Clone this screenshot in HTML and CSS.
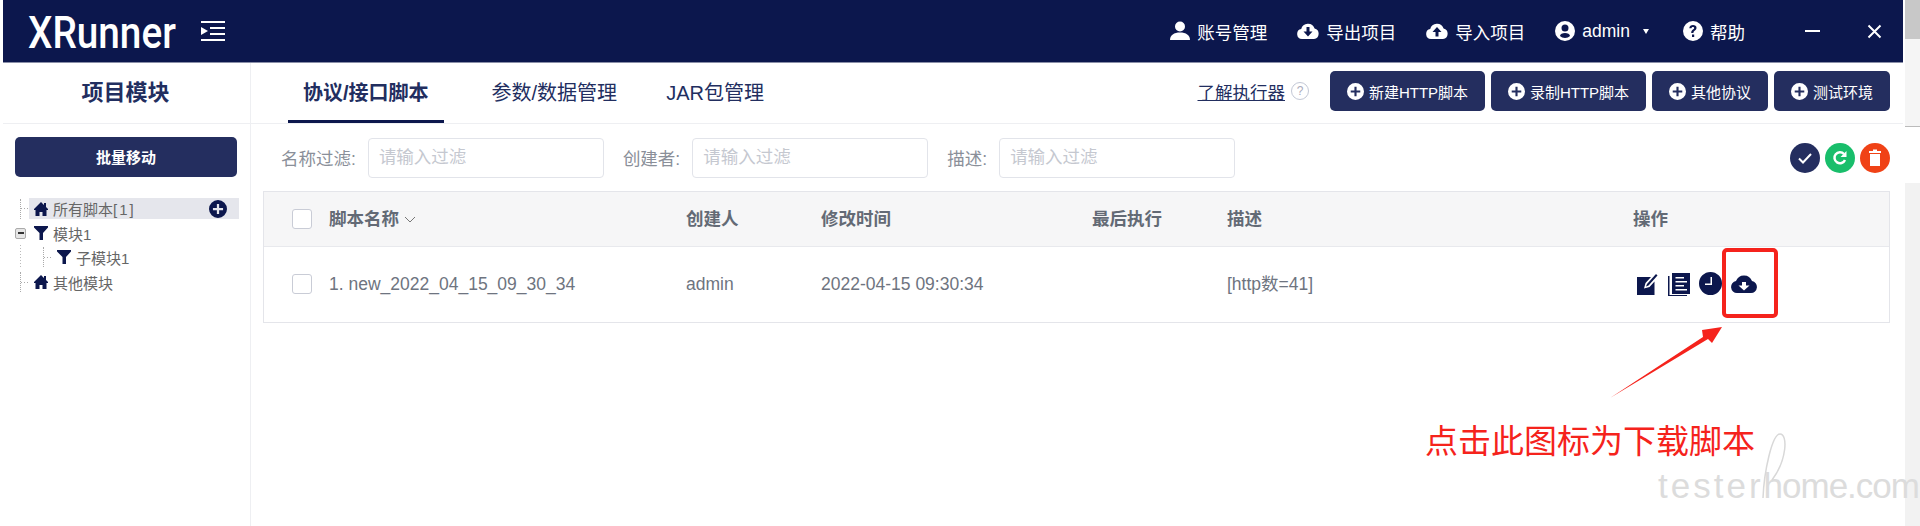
FILE: index.html
```html
<!DOCTYPE html>
<html lang="zh-CN">
<head>
    <meta charset="UTF-8">
    <title>XRunner</title>
    <link rel="stylesheet" href="styles.css">
</head>
<body>
    <svg class="sprites" width="0" height="0">
        <symbol id="i-home" viewBox="0 0 14 14"><path d="M7 0 0 7v1h1.500v6h4v-4h3v4h4V8H14V7l-2-2V1h-2v2z"/></symbol>
        <symbol id="i-funnel" viewBox="0 0 14 14"><path d="M0 0h14v1.500L9 7v7H5.500V7L0 1.500z"/></symbol>
        <symbol id="i-plus" viewBox="0 0 16 16"><path fill-rule="evenodd" d="M8 0a8 8 0 1 1 0 16A8 8 0 0 1 8 0zM7 3.500V7H3.500v2H7v3.500h2V9h3.500V7H9V3.500z"/></symbol>
    </svg>

    <div class="shell">
        <div class="app">
            <header class="topbar">
                <div class="brand">
                    <span class="logo">XRunner</span>
                    <svg class="menu-toggle" width="24" height="20" viewBox="0 0 24 20"><path fill="#fff" d="M0 0h24v2H0zM9 6h15v2H9zM9 12h15v2H9zM0 18h24v2H0zM0 6l7 4-7 4z"/></svg>
                </div>
                <nav class="topnav">
                    <a class="topnav-item">
                        <svg width="20" height="20" viewBox="0 0 20 20"><circle cx="10" cy="5.500" r="5"/><path d="M0 19c0-5 4-7.500 10-7.500S20 14 20 19z"/></svg>账号管理
                    </a>
                    <a class="topnav-item">
                        <svg width="22" height="18" viewBox="0 0 22 18"><path fill-rule="evenodd" d="M5 17a5 5 0 0 1-.8-9.900 7 7 0 0 1 13.400-.5A5.300 5.300 0 0 1 17 17zM9.500 5v4.500H6.500l4.500 5 4.500-5h-3V5z"/></svg>导出项目
                    </a>
                    <a class="topnav-item">
                        <svg width="22" height="18" viewBox="0 0 22 18"><path fill-rule="evenodd" d="M5 17a5 5 0 0 1-.8-9.900 7 7 0 0 1 13.400-.5A5.300 5.300 0 0 1 17 17zM9.500 14.500V10H6.500l4.500-5 4.500 5h-3v4.500z"/></svg>导入项目
                    </a>
                    <a class="topnav-item">
                        <svg width="20" height="20" viewBox="0 0 20 20"><path fill-rule="evenodd" d="M10 0a10 10 0 1 1 0 20 10 10 0 0 1 0-20zm0 3.500a3.500 3.500 0 1 0 0 7 3.500 3.500 0 0 0 0-7zm0 8.500c-2.500 0-5 1-5 3 1.200 1.300 3 2 5 2s3.800-.7 5-2c0-2-2.500-3-5-3z"/></svg>admin<span class="caret"></span>
                    </a>
                    <a class="topnav-item">
                        <svg width="20" height="20" viewBox="0 0 20 20"><path fill-rule="evenodd" d="M10 0a10 10 0 1 1 0 20 10 10 0 0 1 0-20zM9 13.500V16h2.200v-2.500zM10 4c-2 0-3.500 1-3.700 3.200h2.200c.1-.9.600-1.300 1.400-1.300.8 0 1.300.4 1.300 1.100 0 1.500-3 1.500-3 5h2.200c0-2.300 3.100-2.400 3.100-5.200C13.500 5 12 4 10 4z"/></svg>帮助
                    </a>
                </nav>
                <div class="win-controls">
                    <span class="win-min"></span>
                    <svg width="15" height="15" viewBox="0 0 15 15"><path stroke="#fff" stroke-width="2" d="M1.500 1.500l12 12M13.500 1.500l-12 12"/></svg>
                </div>
            </header>

            <div class="workspace">
                <aside class="sidebar">
                    <h2 class="sidebar-title">项目模块</h2>
                    <div class="sidebar-body">
                        <button class="batch-btn">批量移动</button>
                        <ul class="tree">
                            <li class="tree-row selected">
                                <span class="tree-line"></span>
                                <svg class="tree-icon" width="14" height="14"><use href="#i-home"/></svg>
                                <span class="tree-label">所有脚本<span class="count">[1]</span></span>
                                <svg class="tree-add" width="18" height="18"><use href="#i-plus"/></svg>
                            </li>
                            <li class="tree-row branch">
                                <span class="tree-toggle"></span>
                                <svg class="tree-icon" width="14" height="14"><use href="#i-funnel"/></svg>
                                <span class="tree-label">模块1</span>
                            </li>
                            <li class="tree-row nested">
                                <span class="tree-line"></span>
                                <svg class="tree-icon" width="14" height="14"><use href="#i-funnel"/></svg>
                                <span class="tree-label">子模块1</span>
                            </li>
                            <li class="tree-row last">
                                <span class="tree-line"></span>
                                <svg class="tree-icon" width="14" height="14"><use href="#i-home"/></svg>
                                <span class="tree-label">其他模块</span>
                            </li>
                        </ul>
                    </div>
                </aside>

                <main class="main">
                    <div class="tabbar">
                        <div class="tabs">
                            <a class="tab active">协议/接口脚本</a>
                            <a class="tab">参数/数据管理</a>
                            <a class="tab">JAR包管理</a>
                        </div>
                        <div class="tab-actions">
                            <a class="runner-link">了解执行器</a>
                            <span class="hint">?</span>
                            <button class="action-btn wide"><svg width="17" height="17"><use href="#i-plus"/></svg>新建HTTP脚本</button>
                            <button class="action-btn wide"><svg width="17" height="17"><use href="#i-plus"/></svg>录制HTTP脚本</button>
                            <button class="action-btn"><svg width="17" height="17"><use href="#i-plus"/></svg>其他协议</button>
                            <button class="action-btn"><svg width="17" height="17"><use href="#i-plus"/></svg>测试环境</button>
                        </div>
                    </div>

                    <div class="filters">
                        <label class="filter"><span>名称过滤:</span><input placeholder="请输入过滤"></label>
                        <label class="filter"><span>创建者:</span><input placeholder="请输入过滤"></label>
                        <label class="filter"><span>描述:</span><input placeholder="请输入过滤"></label>
                        <div class="filter-btns">
                            <span class="round navy"><svg width="16" height="16" viewBox="0 0 16 16"><path fill="none" stroke="#fff" stroke-width="2" d="M2 8.500l4 4L14 4"/></svg></span>
                            <span class="round green"><svg width="16" height="16" viewBox="0 0 16 16"><path fill="none" stroke="#fff" stroke-width="2.500" d="M13 10a5.500 5.500 0 1 1-1-6"/><path fill="#fff" d="M14.500 1v6h-6z"/></svg></span>
                            <span class="round red"><svg width="14" height="17" viewBox="0 0 14 17"><path fill="#fff" d="M1 2h4V.5h4V2h4v2H1zM2 5h10v12H2z"/></svg></span>
                        </div>
                    </div>

                    <div class="table">
                        <div class="table-row head">
                            <span class="cell c-name"><span class="check"></span>脚本名称<svg class="sort" width="12" height="7" viewBox="0 0 12 7"><path fill="none" stroke="#777" d="M1 1l5 5 5-5"/></svg></span>
                            <span class="cell c-owner">创建人</span>
                            <span class="cell c-time">修改时间</span>
                            <span class="cell c-last">最后执行</span>
                            <span class="cell c-desc">描述</span>
                            <span class="cell c-ops">操作</span>
                        </div>
                        <div class="table-row body">
                            <span class="cell c-name"><span class="check"></span>1. new_2022_04_15_09_30_34</span>
                            <span class="cell c-owner">admin</span>
                            <span class="cell c-time">2022-04-15 09:30:34</span>
                            <span class="cell c-last"></span>
                            <span class="cell c-desc">[http数=41]</span>
                            <span class="cell c-ops ops">
                                <svg width="22" height="22" viewBox="0 0 22 22"><path d="M0 4h14l-5.500 6-1.500 5.500 5.500-1.500 5-5.500V22H0z"/><path d="M10 11 19 1l1.500 1.500-9 10-2.500 1z"/></svg>
                                <svg width="22" height="24" viewBox="0 0 22 24"><path fill-rule="evenodd" d="M4 1h18v21H4zM7.500 5v1.500H16V5zm0 4v1.500H19V9zm0 4v1.500H16V13zm0 4v1.500H19V17z"/><path d="M0 4h1.500v19H19v1H0z"/></svg>
                                <svg width="23" height="23" viewBox="0 0 23 23"><path fill-rule="evenodd" d="M11.500 0a11.500 11.500 0 1 1 0 23 11.500 11.500 0 0 1 0-23zM11.500 5v6.500H6V13h7V5z"/></svg>
                                <svg width="26" height="18" viewBox="0 0 26 18"><path fill-rule="evenodd" d="M6 18a6 6 0 0 1-1-11.900 8.500 8.500 0 0 1 16 0A6 6 0 0 1 20 18zM11 7v3.500H7.500l5.500 5 5.500-5H15V7z"/></svg>
                            </span>
                        </div>
                    </div>
                </main>
            </div>

            <div class="callout-box"></div>
            <svg class="callout-arrow" width="120" height="80" viewBox="0 0 120 80"><path fill="#f5231c" d="M1 72 94 11 93 4 113 1 103 17 99 13z"/></svg>
            <div class="callout-text">点击此图标为下载脚本</div>
        </div>
        <div class="scrollbar">
            <div class="scroll-upper"><div class="thumb"></div></div>
            <div class="scroll-lower"></div>
        </div>
        <div class="watermark"><span class="wm-a">tester</span><span class="wm-b">home.com</span></div>
        <svg class="wm-flourish" width="40" height="70" viewBox="0 0 40 70"><path fill="none" stroke="#d8d8d8" stroke-width="1.500" d="M3 66C4 40 12 2 20 2c8 0 7 26-8 46"/></svg>
    </div>
</body>
</html>
```

FILE: styles.css
```css
* {
    box-sizing: border-box;
}

body {
    margin: 0;
    background: #fff;
    font-family: "Liberation Sans", "Noto Sans CJK SC", sans-serif;
    color: #6b7280;
    overflow: hidden;
}

.sprites {
    display: none;
}

.shell {
    display: flex;
    height: 526px;
}

.app {
    flex: 1;
    padding-left: 3px;
}

.scrollbar {
    display: flex;
    flex-direction: column;
    width: 15px;
    margin-left: 2px;
}

.scroll-upper {
    height: 127px;
    background: #f5f5f5;
    border-bottom: 1px solid #bbb;
}

.thumb {
    height: 39px;
    background: #c8c8c8;
}

.scroll-lower {
    flex: 1;
    margin-top: 56px;
    background: #f2f2f2;
}

/* top bar */
.topbar {
    display: flex;
    align-items: center;
    height: 63px;
    padding: 0 21px 0 25px;
    background: #0c174d;
    border-bottom: 1px solid #8a8fa8;
    color: #fff;
}

.brand {
    display: flex;
    align-items: center;
    gap: 23px;
}

.logo {
    width: 150px;
    padding-top: 3px;
    font-family: Roboto, sans-serif;
    font-size: 45px;
    font-weight: 500;
    line-height: 50px;
    transform: scaleX(0.86);
    transform-origin: left center;
    white-space: nowrap;
}

.topnav {
    display: flex;
    align-items: center;
    gap: 30px;
    margin-left: auto;
    font-size: 17.5px;
}

.topnav-item {
    display: flex;
    align-items: center;
    gap: 7px;
}

.topnav-item svg {
    fill: #fff;
}

.caret {
    width: 0;
    height: 0;
    margin: 0 4px 0 6px;
    border: 3.5px solid transparent;
    border-top: 5px solid #fff;
    border-bottom: 0;
}

.win-controls {
    display: flex;
    align-items: center;
    gap: 47px;
    margin-left: 60px;
}

.win-min {
    width: 15px;
    height: 2px;
    background: #fff;
}

/* workspace */
.workspace {
    display: flex;
    height: 463px;
}

.sidebar {
    width: 248px;
    border-right: 1px solid #eeeff2;
    flex-shrink: 0;
}

.sidebar-title {
    height: 61px;
    margin: 0;
    padding-right: 2px;
    border-bottom: 1px solid #eeeff2;
    color: #222e5f;
    font-size: 22px;
    line-height: 60px;
    text-align: center;
}

.sidebar-body {
    padding: 13px 11px 0 12px;
}

.batch-btn {
    display: block;
    width: 222px;
    height: 40px;
    padding-bottom: 3px;
    border: 0;
    border-radius: 5px;
    background: #242e5f;
    color: #fff;
    font: 700 15px "Liberation Sans", "Noto Sans CJK SC", sans-serif;
}

.tree {
    margin: 21px 0 0;
    padding: 0;
    list-style: none;
    font-size: 15px;
    color: #666;
}

.tree-row {
    display: flex;
    align-items: center;
    gap: 5px;
    height: 24px;
    padding-left: 5px;
}

.tree-row.selected {
    height: 21px;
    margin-bottom: 2px;
    background: linear-gradient(to right, #fff 14px, #e5e6ec 14px);
}

.tree-row.branch {
    padding-left: 0;
}

.tree-row.nested {
    padding-left: 28px;
    background: repeating-linear-gradient(#bbb 0 1px, #fff 1px 3px) 5px 0 / 1px 100% no-repeat;
}

.tree-row.last {
    margin-top: 1px;
}

.tree-line {
    width: 9px;
    height: 20px;
    border-left: 1px dotted #aaa;
    background: repeating-linear-gradient(to right, #aaa 0 1px, #fff 1px 3px) left center / 9px 1px no-repeat;
}

.tree-toggle {
    width: 11px;
    height: 11px;
    margin-right: 3px;
    border: 1px solid #aaa;
    border-radius: 2px;
    background: linear-gradient(#333, #333) center / 6px 2px no-repeat, #e6e6e6;
}

.tree-icon {
    fill: #0c174d;
    flex-shrink: 0;
}

.count {
    letter-spacing: 2px;
}

.tree-add {
    fill: #0c174d;
    margin-left: auto;
    margin-right: 12px;
}

/* main */
.main {
    flex: 1;
    min-width: 0;
}

.tabbar {
    display: flex;
    justify-content: space-between;
    height: 61px;
    border-bottom: 1px solid #eeeff2;
}

.tabs {
    display: flex;
    padding-left: 37px;
}

.tab {
    height: 60px;
    padding: 0 15px;
    margin-right: 19px;
    color: #222e5f;
    font-size: 20px;
    line-height: 60px;
    white-space: nowrap;
}

.tab.active {
    margin-right: 33px;
    border-bottom: 3px solid #0c174d;
    font-weight: 700;
}

.tab-actions {
    display: flex;
    align-items: center;
    gap: 6px;
    padding: 0 0 4px;
    margin-right: 13px;
}

.runner-link {
    color: #222e5f;
    font-size: 17.5px;
    text-decoration: underline;
}

.hint {
    width: 18px;
    height: 18px;
    margin-right: 15px;
    border: 1px solid #c3c8d6;
    border-radius: 50%;
    color: #aab;
    font-size: 12px;
    line-height: 16px;
    text-align: center;
}

.action-btn {
    display: flex;
    align-items: center;
    justify-content: center;
    gap: 5px;
    width: 116px;
    height: 40px;
    padding: 0;
    border: 0;
    border-radius: 5px;
    background: #242e5f;
    color: #fff;
    font: 15px "Liberation Sans", "Noto Sans CJK SC", sans-serif;
}

.action-btn.wide {
    width: 155px;
}

.action-btn svg {
    fill: #fff;
}

.filters {
    display: flex;
    align-items: center;
    gap: 19px;
    height: 67px;
    padding: 0 13px 0 30px;
    font-size: 17.5px;
}

.filter {
    display: flex;
    align-items: center;
    gap: 12px;
    color: #8a8f99;
}

.filter input {
    width: 236px;
    height: 40px;
    padding: 0 10px;
    border: 1px solid #e2e4ea;
    border-radius: 4px;
    font: 17.5px "Liberation Sans", "Noto Sans CJK SC", sans-serif;
}

.filter input::placeholder {
    color: #c5c8d0;
}

.filter-btns {
    display: flex;
    gap: 5px;
    margin-left: auto;
}

.round {
    display: flex;
    align-items: center;
    justify-content: center;
    width: 30px;
    height: 30px;
    border-radius: 50%;
}

.round.navy { background: #242e5f; }
.round.green { background: #19be6b; }
.round.red { background: #f04216; }

/* table */
.table {
    margin: 0 13px 0 12px;
    border: 1px solid #e4e5ea;
    font-size: 17.5px;
    line-height: 20px;
}

.table-row {
    display: flex;
    align-items: center;
}

.table-row.head {
    height: 55px;
    background: #f6f6f7;
    border-bottom: 1px solid #e8e9ed;
    font-weight: 700;
    color: #636a75;
}

.table-row.body {
    height: 75px;
    padding-bottom: 2px;
    color: #6e7480;
}

.cell {
    display: flex;
    align-items: center;
    white-space: nowrap;
}

.check {
    width: 20px;
    height: 20px;
    margin: 0 17px 0 28px;
    border: 1px solid #c9ccd6;
    border-radius: 3px;
    background: #fff;
}

.sort {
    margin-left: 5px;
}

.c-name { width: 422px; }
.c-owner { width: 135px; }
.c-time { width: 271px; }
.c-last { width: 135px; }
.c-desc { width: 406px; }

.ops {
    gap: 9px;
    padding-left: 4px;
}

.ops svg {
    fill: #0c174d;
}

/* annotation over the screenshot */
.callout-box {
    position: absolute;
    left: 1722px;
    top: 248px;
    width: 56px;
    height: 70px;
    border: 4px solid #f5231c;
    border-radius: 5px;
}

.callout-arrow {
    position: absolute;
    left: 1609px;
    top: 326px;
}

.callout-text {
    position: absolute;
    left: 1425px;
    top: 422px;
    color: #f5231c;
    font-size: 33px;
    line-height: 40px;
    white-space: nowrap;
}

.watermark {
    position: absolute;
    left: 1658px;
    top: 466px;
    color: #dcdcdc;
    font-size: 35px;
    line-height: 40px;
    white-space: nowrap;
}

.wm-a {
    letter-spacing: 3px;
}

.wm-b {
    letter-spacing: -1px;
}

.wm-flourish {
    position: absolute;
    left: 1760px;
    top: 432px;
}
```
